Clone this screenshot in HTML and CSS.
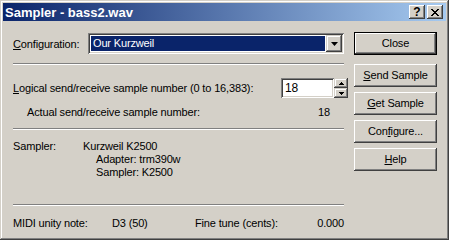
FILE: index.html
```html
<!DOCTYPE html>
<html>
<head>
<meta charset="utf-8">
<link rel="stylesheet" href="styles.css">
</head>
<body>
<div class="window">
  <div class="titlebar">
    <span class="title">Sampler - bass2.wav</span>
    <span class="tbtn help">?</span>
    <span class="tbtn close"><svg width="8" height="7" viewBox="0 0 8 7"><path d="M0 0h2v1h1v1h2v-1h1v-1h2v1h-1v1h-1v1h-1v1h1v1h1v1h1v1h-2v-1h-1v-1h-2v1h-1v1h-2v-1h1v-1h1v-1h1v-1h-1v-1h-1v-1h-1z" fill="#000"/></svg></span>
  </div>
  <div class="content">
    <div class="main">
      <div class="row config">
        <span class="label-config"><u>C</u>onfiguration:</span>
        <div class="combo">
          <div class="combo-field"><span class="combo-sel">Our Kurzweil</span></div>
          <div class="combo-btn"><svg width="7" height="4" viewBox="0 0 7 4"><path d="M0 0h7l-3.5 4z" fill="#000"/></svg></div>
        </div>
      </div>
      <div class="sep sep1"></div>
      <div class="row logical">
        <span class="grow"><u>L</u>ogical send/receive sample number (0 to 16,383):</span>
        <div class="spin">
          <div class="edit">18</div>
          <div class="spin-btns">
            <div class="sbtn"><svg width="5" height="3" viewBox="0 0 5 3"><path d="M2 0h1v1h1v1h1v1h-5v-1h1v-1h1z" fill="#000"/></svg></div>
            <div class="sbtn"><svg width="5" height="3" viewBox="0 0 5 3"><path d="M0 0h5v1h-1v1h-1v1h-1v-1h-1v-1h-1z" fill="#000"/></svg></div>
          </div>
        </div>
      </div>
      <div class="row actual">
        <span class="grow">Actual send/receive sample number:</span>
        <span>18</span>
      </div>
      <div class="sep sep2"></div>
      <div class="sampler">
        <span>Sampler:</span><span>Kurzweil K2500</span>
        <span></span><span class="indent">Adapter: trm390w</span>
        <span></span><span class="indent">Sampler: K2500</span>
      </div>
      <div class="sep sep3"></div>
      <div class="row midi">
        <span class="midi-l">MIDI unity note:</span>
        <span class="midi-v">D3 (50)</span>
        <span class="grow">Fine tune (cents):</span>
        <span>0.000</span>
      </div>
    </div>
    <div class="buttons">
      <div class="btn default"><span class="btn-in">Close</span></div>
      <div class="btn first"><span class="btn-in"><u>S</u>end Sample</span></div>
      <div class="btn"><span class="btn-in"><u>G</u>et Sample</span></div>
      <div class="btn"><span class="btn-in">Con<u>f</u>igure...</span></div>
      <div class="btn"><span class="btn-in"><u>H</u>elp</span></div>
    </div>
  </div>
</div>
</body>
</html>
```
FILE: styles.css
```css
html, body {
  margin: 0;
  padding: 0;
}
body {
  width: 449px;
  height: 240px;
  overflow: hidden;
  font-family: "Liberation Sans", Arial, sans-serif;
  font-size: 11px;
  letter-spacing: -0.15px;
  color: #000;
  background: #d4d0c8;
}
.window {
  width: 449px;
  height: 240px;
  box-sizing: border-box;
  padding: 3px;
  background: #d4d0c8;
  box-shadow: inset -1px -1px #404040, inset 1px 1px #d4d0c8, inset -2px -2px #808080, inset 2px 2px #fff;
}
.titlebar {
  height: 18px;
  display: flex;
  align-items: center;
  padding: 0 3px 0 2px;
  background: linear-gradient(90deg, #0a246a, #a6caf0);
  color: #fff;
  font-weight: bold;
  font-size: 13px;
  letter-spacing: 0;
}
.title {
  flex: 1;
}
.tbtn {
  width: 16px;
  height: 14px;
  box-sizing: border-box;
  display: flex;
  align-items: center;
  justify-content: center;
  background: #d4d0c8;
  color: #000;
  box-shadow: inset -1px -1px #404040, inset 1px 1px #fff, inset -2px -2px #808080, inset 2px 2px #d4d0c8;
}
.tbtn.help {
  margin-right: 2px;
  font-size: 12px;
  font-weight: bold;
}
.content {
  display: flex;
  padding: 11px 9px 0 10px;
  gap: 10px;
}
.main {
  width: 331px;
  display: flex;
  flex-direction: column;
}
.row {
  display: flex;
  align-items: center;
}
.grow {
  flex: 1;
}
.config {
  height: 23px;
}
.label-config {
  width: 75px;
}
.combo {
  flex: 1;
  height: 21px;
  box-sizing: border-box;
  display: flex;
  padding: 2px;
  background: #fff;
  box-shadow: inset 1px 1px #808080, inset -1px -1px #fff, inset 2px 2px #404040, inset -2px -2px #d4d0c8;
}
.combo-field {
  flex: 1;
  padding: 1px;
  display: flex;
}
.combo-sel {
  flex: 1;
  background: #0a246a;
  color: #fff;
  padding-left: 2px;
  line-height: 15px;
}
.combo-btn {
  width: 16px;
  height: 17px;
  box-sizing: border-box;
  display: flex;
  align-items: center;
  justify-content: center;
  background: #d4d0c8;
  box-shadow: inset -1px -1px #404040, inset 1px 1px #d4d0c8, inset -2px -2px #808080, inset 2px 2px #fff;
}
.sep {
  border-top: 1px solid #808080;
  border-bottom: 1px solid #fff;
  height: 0;
}
.sep1 {
  margin-top: 8px;
}
.logical {
  margin-top: 13px;
  height: 20px;
}
.spin {
  display: flex;
  margin-right: -4px;
}
.edit {
  width: 53px;
  height: 20px;
  box-sizing: border-box;
  background: #fff;
  padding: 3px 0 0 4px;
  line-height: 14px;
  font-size: 12px;
  box-shadow: inset 1px 1px #808080, inset -1px -1px #fff, inset 2px 2px #404040, inset -2px -2px #d4d0c8;
}
.spin-btns {
  width: 14px;
  height: 20px;
  display: flex;
  flex-direction: column;
}
.sbtn {
  height: 10px;
  display: flex;
  align-items: center;
  justify-content: center;
  background: #d4d0c8;
  box-shadow: inset -1px -1px #404040, inset 1px 1px #d4d0c8, inset -2px -2px #808080, inset 2px 2px #fff;
}
.actual {
  margin-top: 7px;
  height: 14px;
  padding: 0 14px;
}
.sep2 {
  margin-top: 9px;
}
.sampler {
  margin-top: 10px;
  display: grid;
  grid-template-columns: 70px 1fr;
  line-height: 13px;
}
.indent {
  padding-left: 13px;
}
.sep3 {
  margin-top: 25px;
}
.midi {
  margin-top: 10px;
  height: 13px;
}
.midi-l {
  width: 99px;
}
.midi-v {
  width: 83px;
}
.buttons {
  width: 83px;
  display: flex;
  flex-direction: column;
  gap: 5px;
}
.btn {
  height: 23px;
  box-sizing: border-box;
  display: flex;
  align-items: center;
  justify-content: center;
  background: #d4d0c8;
  box-shadow: inset -1px -1px #404040, inset 1px 1px #fff, inset -2px -2px #808080, inset 2px 2px #d4d0c8;
}
.btn.default {
  box-shadow: inset 0 0 0 1px #000, inset -2px -2px #404040, inset 2px 2px #fff, inset -3px -3px #808080;
}
.btn.first {
  margin-top: 4px;
}
.btn-in {
  line-height: 13px;
}
```
